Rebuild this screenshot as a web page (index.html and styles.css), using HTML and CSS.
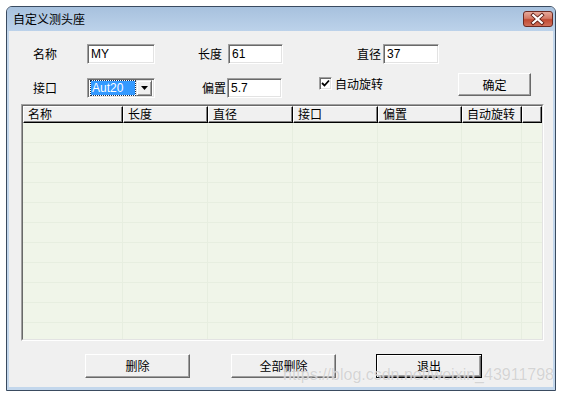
FILE: index.html
```html
<!DOCTYPE html>
<html lang="zh-CN">
<head>
    <meta charset="UTF-8">
    <title>自定义测头座</title>
    <link rel="stylesheet" href="styles.css">
</head>
<body>
    <div class="window">
        <div class="titlebar">
            <span class="title">自定义测头座</span>
            <span class="close">
                <svg width="30" height="16" viewBox="0 0 30 16">
                    <path d="M10.5 4 L19.5 12 M19.5 4 L10.5 12" stroke="#5a1c14" stroke-width="4" stroke-linecap="square"/>
                    <path d="M10.5 4 L19.5 12 M19.5 4 L10.5 12" stroke="#fff" stroke-width="2.2" stroke-linecap="square"/>
                </svg>
            </span>
        </div>

        <div class="client">
            <!-- primera fila -->
            <div class="row row-top">
                <span class="lbl lbl-name">名称</span>
                <div class="edit edit-name">MY</div>
                <span class="lbl lbl-len">长度</span>
                <div class="edit edit-len">61</div>
                <span class="lbl lbl-dia">直径</span>
                <div class="edit edit-dia">37</div>
            </div>

            <!-- segunda fila -->
            <div class="row row-second">
                <span class="lbl lbl-name lbl-low">接口</span>
                <div class="combo">
                    <span class="combo-sel">Aut20</span>
                    <span class="combo-btn">
                        <svg width="7" height="4" viewBox="0 0 7 4"><path d="M0 0 H7 L3.5 4 Z" fill="#000"/></svg>
                    </span>
                </div>
                <span class="lbl lbl-off lbl-low">偏置</span>
                <div class="edit edit-len edit-low">5.7</div>
                <div class="check-group">
                    <span class="check">
                        <svg width="9" height="9" viewBox="0 0 9 9"><path d="M1 4 L3.5 6.5 L8 1.5" stroke="#000" stroke-width="1.8" fill="none"/></svg>
                    </span>
                    <span class="check-text">自动旋转</span>
                </div>
                <button class="btn btn-ok">确定</button>
            </div>

            <!-- lista -->
            <div class="list">
                <div class="list-inner">
                    <div class="list-head">
                        <div class="hcell c1">名称</div>
                        <div class="hcell c2">长度</div>
                        <div class="hcell c3">直径</div>
                        <div class="hcell c4">接口</div>
                        <div class="hcell c5">偏置</div>
                        <div class="hcell c6">自动旋转</div>
                        <div class="hcell cfill"></div>
                    </div>
                    <div class="list-body">
                        <div class="bcol c1"></div>
                        <div class="bcol c2"></div>
                        <div class="bcol c3"></div>
                        <div class="bcol c4"></div>
                        <div class="bcol c5"></div>
                        <div class="bcol c6"></div>
                    </div>
                </div>
            </div>

            <!-- botones inferiores -->
            <div class="row row-bottom">
                <button class="btn btn-del">删除</button>
                <button class="btn btn-delall">全部删除</button>
                <button class="btn btn-exit btn-default">退出</button>
            </div>
        </div>
    </div>

    <div class="watermark">https://blog.csdn.net/weixin_43911798</div>
</body>
</html>
```

FILE: styles.css
```css
/* Página */
body {
    margin: 0;
    background: #ffffff;
    font-family: "Noto Sans CJK SC", "Liberation Sans", sans-serif;
    font-size: 12px;
    color: #000;
}

/* Ventana */
.window {
    margin: 6px 0 0 6px;
    width: 550px;
    height: 385px;
    box-sizing: border-box;
    border: 1px solid #3a4b60;
    border-radius: 6px 6px 0 0;
    background: #c3d7ec;
    display: flex;
    flex-direction: column;
}

.titlebar {
    height: 24px;
    flex: none;
    display: flex;
    align-items: flex-start;
    background: linear-gradient(#a7c1de, #bcd2ea);
    border-radius: 5px 5px 0 0;
}

.title {
    margin: 4px 0 0 6px;
    line-height: 16px;
    font-size: 12px;
    flex: 1;
}

.close {
    margin: 4px 2px 0 0;
    width: 30px;
    height: 16px;
    box-sizing: border-box;
    border: 1px solid #6b2a22;
    border-radius: 3px;
    background: linear-gradient(#e7a99b 0%, #d47a66 45%, #c14a33 55%, #d0705a 100%);
    display: flex;
}

.close svg {
    margin: -1px 0 0 -1px;
}

/* Área cliente */
.client {
    flex: 1;
    margin: 0 2px 3px 2px;
    background: #f0f0f0;
    padding-top: 13px;
    box-sizing: border-box;
}

.row {
    display: flex;
}

.row-top {
    height: 20px;
    align-items: center;
}

.row-second {
    height: 25px;
    margin-top: 9px;
    align-items: flex-start;
}

.lbl {
    line-height: 20px;
    white-space: nowrap;
}

.lbl-low {
    margin-top: 5px;
}

.lbl-name {
    margin-left: 24px;
    width: 54px;
}

.lbl-len {
    margin-left: 43px;
    width: 30px;
}

.lbl-dia {
    margin-left: 74px;
    width: 26px;
}

.lbl-off {
    margin-left: 47px;
    width: 25px;
}

/* Cuadros de texto hundidos */
.edit {
    height: 20px;
    box-sizing: border-box;
    background: #fff;
    border: 1px solid;
    border-color: #a0a0a0 #ffffff #ffffff #a0a0a0;
    box-shadow: inset 1px 1px 0 #696969, inset -1px -1px 0 #e3e3e3;
    font-family: "Liberation Sans", sans-serif;
    font-size: 12px;
    line-height: 18px;
    padding-left: 3px;
}

.edit-low {
    margin-top: 5px;
}

.edit-name {
    width: 68px;
}

.edit-len {
    width: 55px;
}

.edit-dia {
    width: 56px;
}

/* Lista desplegable */
.combo {
    width: 68px;
    height: 20px;
    margin-top: 5px;
    box-sizing: border-box;
    background: #fff;
    border: 1px solid;
    border-color: #a0a0a0 #ffffff #ffffff #a0a0a0;
    box-shadow: inset 1px 1px 0 #696969, inset -1px -1px 0 #e3e3e3;
    display: flex;
    padding: 2px 2px 2px 3px;
}

.combo-sel {
    width: 46px;
    height: 14px;
    box-sizing: border-box;
    background: #3399ff;
    color: #fff;
    outline: 1px dotted #1a3050;
    font-family: "Liberation Sans", sans-serif;
    font-size: 12px;
    line-height: 14px;
    padding-left: 1px;
}

.combo-btn {
    width: 16px;
    height: 16px;
    margin: -1px 0 0 1px;
    box-sizing: border-box;
    background: #f0f0f0;
    border: 1px solid;
    border-color: #e3e3e3 #696969 #696969 #e3e3e3;
    box-shadow: inset 1px 1px 0 #fff, inset -1px -1px 0 #a0a0a0;
    display: flex;
    align-items: center;
    justify-content: center;
}

/* Casilla */
.check-group {
    margin-left: 37px;
    width: 139px;
    height: 20px;
    display: flex;
    align-items: center;
}

.check {
    width: 13px;
    height: 13px;
    box-sizing: border-box;
    background: #fff;
    border: 1px solid;
    border-color: #a0a0a0 #ffffff #ffffff #a0a0a0;
    box-shadow: inset 1px 1px 0 #696969, inset -1px -1px 0 #e3e3e3;
    display: flex;
    align-items: center;
    justify-content: center;
}

.check-text {
    margin-left: 3px;
}

/* Botones */
.btn {
    font-family: "Noto Sans CJK SC", sans-serif;
    font-size: 12px;
    color: #000;
    background: #f0f0f0;
    border: 1px solid;
    border-color: #ffffff #696969 #696969 #ffffff;
    box-shadow: inset -1px -1px 0 #a0a0a0;
    padding: 0;
    margin: 0;
    line-height: 20px;
}

.btn-ok {
    width: 73px;
    height: 23px;
}

.btn-default {
    border-color: #000;
    box-shadow: inset 1px 1px 0 #fff, inset -1px -1px 0 #696969, inset -2px -2px 0 #a0a0a0;
}

.row-bottom {
    margin-top: 13px;
}

.btn-del,
.btn-delall,
.btn-exit {
    height: 24px;
    width: 105px;
}

.btn-del {
    margin-left: 76px;
}

.btn-delall {
    margin-left: 41px;
}

.btn-exit {
    margin-left: 40px;
    width: 106px;
}

/* Vista de lista */
.list {
    margin: 6px 0 0 12px;
    width: 523px;
    height: 237px;
    box-sizing: border-box;
    border: 1px solid;
    border-color: #a0a0a0 #ffffff #ffffff #a0a0a0;
}

.list-inner {
    height: 100%;
    box-sizing: border-box;
    border: 1px solid;
    border-color: #696969 #e3e3e3 #e3e3e3 #696969;
    display: flex;
    flex-direction: column;
    background: #f0f5e9;
}

.list-head {
    display: flex;
    height: 17px;
    flex: none;
}

.hcell {
    box-sizing: border-box;
    height: 17px;
    background: #f0f0f0;
    border: 1px solid;
    border-color: #ffffff #000000 #000000 #ffffff;
    box-shadow: inset -1px -1px 0 #808080;
    padding-left: 4px;
    line-height: 14px;
    white-space: nowrap;
}

.c1 { width: 100px; }
.c2 { width: 85px; }
.c3 { width: 85px; }
.c4 { width: 85px; }
.c5 { width: 84px; }
.c6 { width: 60px; }
.cfill { width: 20px; }

.list-body {
    flex: 1;
    display: flex;
    background: repeating-linear-gradient(to bottom, transparent 0, transparent 19px, #e7eee0 19px, #e7eee0 20px);
}

.bcol {
    box-sizing: border-box;
    border-right: 1px solid #e7eee0;
}

/* Marca de agua encima */
.watermark {
    position: absolute;
    left: 283px;
    top: 366px;
    font-family: "Liberation Sans", sans-serif;
    font-size: 16px;
    color: rgba(195, 195, 195, 0.7);
    text-shadow: 0 0 1px rgba(255, 255, 255, 0.9);
    white-space: nowrap;
}
```
